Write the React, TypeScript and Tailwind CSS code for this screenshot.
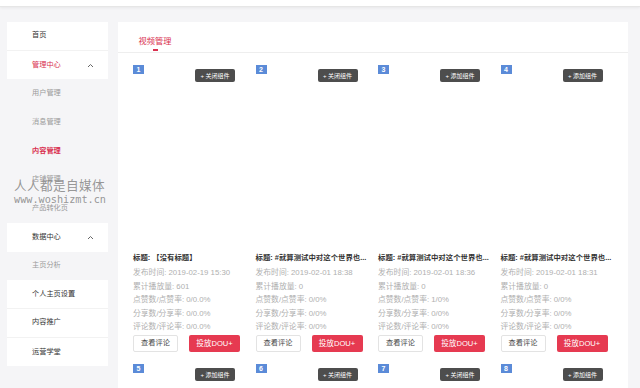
import React from 'react';

type Video = {
  id: number;
  title: string;
  time: string;
  plays: string;
  likes: string;
  shares: string;
  comments: string;
  widgetOn: boolean;
};

const longTitle = '标题: #就算测试中对这个世界也...';

const videos: Video[] = [
  { id: 1, title: '标题: 【没有标题】', time: '2019-02-19 15:30', plays: '601', likes: '0/0.0%', shares: '0/0.0%', comments: '0/0.0%', widgetOn: true },
  { id: 2, title: longTitle, time: '2019-02-01 18:38', plays: '0', likes: '0/0%', shares: '0/0%', comments: '0/0%', widgetOn: true },
  { id: 3, title: longTitle, time: '2019-02-01 18:36', plays: '0', likes: '1/0%', shares: '0/0%', comments: '0/0%', widgetOn: false },
  { id: 4, title: longTitle, time: '2019-02-01 18:31', plays: '0', likes: '0/0%', shares: '0/0%', comments: '0/0%', widgetOn: false },
  { id: 5, title: longTitle, time: '2019-01-30 12:10', plays: '0', likes: '0/0%', shares: '0/0%', comments: '0/0%', widgetOn: false },
  { id: 6, title: longTitle, time: '2019-01-30 12:06', plays: '0', likes: '0/0%', shares: '0/0%', comments: '0/0%', widgetOn: true },
  { id: 7, title: longTitle, time: '2019-01-29 20:41', plays: '0', likes: '0/0%', shares: '0/0%', comments: '0/0%', widgetOn: true },
  { id: 8, title: longTitle, time: '2019-01-29 20:33', plays: '0', likes: '0/0%', shares: '0/0%', comments: '0/0%', widgetOn: false },
];

const font = { fontFamily: '"Liberation Sans", "Noto Sans CJK SC", sans-serif' };

const Chevron = () => (
  <svg width="7" height="5" viewBox="0 0 7 5" className="text-[#666]">
    <path d="M1 4 L3.5 1.5 L6 4" fill="none" stroke="currentColor" strokeWidth="1" />
  </svg>
);

// sidebar row
const MenuRow = ({
  label,
  kind,
  active,
  open,
  line,
}: {
  label: string;
  kind: 'main' | 'sub';
  active?: boolean;
  open?: boolean;
  line?: boolean;
}) => (
  <div
    className={`flex h-[28.7px] items-center justify-between pl-[25px] pr-[14px] text-[7.2px] ${
      kind === 'main' ? 'bg-white' : 'bg-[#f5f5f7]'
    } ${line ? 'border-b border-[#f2f2f2]' : ''} ${
      active ? (kind === 'sub' ? 'font-bold text-[#d9304f]' : 'text-[#d9304f]') : kind === 'sub' ? 'text-[#9a9a9a]' : 'text-[#333]'
    }`}
  >
    <span>{label}</span>
    {open && <Chevron />}
  </div>
);

const VideoCard = ({ v }: { v: Video }) => (
  <div className="flex w-[107px] flex-col">
    {/* cover area */}
    <div className="flex h-[186px] items-start justify-between">
      <span className="flex h-[9px] w-[11px] items-center justify-center bg-[#5b8bd8] text-[7px] font-bold leading-none text-white">
        {v.id}
      </span>
      <span className="mr-[5px] mt-[4px] flex h-[13px] w-[40px] items-center justify-center rounded-[2px] bg-[#4d4d4d] text-[6px] leading-none text-white">
        + {v.widgetOn ? '关闭组件' : '添加组件'}
      </span>
    </div>

    {/* info */}
    <div className="whitespace-nowrap text-[7.4px] font-bold leading-[14px] text-[#333]">{v.title}</div>
    <div className="mt-[1px] whitespace-nowrap text-[7.8px] leading-[13.5px] text-[#b0b0b0]">
      <div>发布时间: {v.time}</div>
      <div>累计播放量: {v.plays}</div>
      <div>点赞数/点赞率: {v.likes}</div>
      <div>分享数/分享率: {v.shares}</div>
      <div>评论数/评论率: {v.comments}</div>
    </div>

    <div className="mt-[1.5px] flex gap-[11px]">
      <span className="flex h-[17px] w-[45px] items-center justify-center rounded-[2px] border border-[#e3e3e3] bg-white text-[7.2px] text-[#444]">
        查看评论
      </span>
      <span className="flex h-[17px] w-[51px] items-center justify-center rounded-[2px] bg-[#e63a51] text-[7.6px] text-white">
        投放DOU+
      </span>
    </div>
  </div>
);

export default function App() {
  return (
    <div className="relative h-[388px] w-[640px] overflow-hidden bg-[#f5f5f7]" style={font}>
      {/* top bar */}
      <div className="h-[7px] border-b border-[#e6e6e6] bg-white shadow-[0_1px_3px_rgba(0,0,0,0.06)]" />

      <div className="flex gap-[10px] pl-[7px] pr-[12px] pt-[15px]">
        {/* Sidebar */}
        <div className="relative flex w-[101px] shrink-0 flex-col self-start">
          <MenuRow label="首页" kind="main" line />
          <MenuRow label="管理中心" kind="main" active open />
          <MenuRow label="用户管理" kind="sub" />
          <MenuRow label="消息管理" kind="sub" />
          <MenuRow label="内容管理" kind="sub" active />
          <MenuRow label="店铺管理" kind="sub" />
          <MenuRow label="产品转化页" kind="sub" />
          <MenuRow label="数据中心" kind="main" open />
          <MenuRow label="主页分析" kind="sub" />
          <MenuRow label="个人主页设置" kind="main" line />
          <MenuRow label="内容推广" kind="main" line />
          <MenuRow label="运营学堂" kind="main" />

          {/* watermark */}
          <div className="pointer-events-none absolute left-[7px] top-[154px] flex flex-col text-[#8a8a8a]/90">
            <span className="text-[12.6px] leading-[18px] tracking-[0.4px]" style={{ fontFamily: '"Noto Sans CJK SC", sans-serif' }}>
              人人都是自媒体
            </span>
            <span className="text-[10.2px] leading-[11px]" style={{ fontFamily: '"DejaVu Sans Mono", monospace' }}>
              www.woshizmt.cn
            </span>
          </div>
        </div>

        {/* Main panel */}
        <div className="flex-1 bg-white">
          <div className="border-b border-[#eeeeee] px-[20px] pb-[1px] pt-[14px]">
            <div className="flex w-[34px] flex-col items-center">
              <span className="text-[8.2px] leading-[12px] text-[#d9304f]">视频管理</span>
              <span className="mt-[1px] h-[2px] w-[5px] bg-[#d9304f]" />
            </div>
          </div>

          <div className="grid grid-cols-[repeat(4,107px)] gap-x-[15.5px] gap-y-[12px] pl-[15px] pt-[12px]">
            {videos.map((v) => (
              <VideoCard key={v.id} v={v} />
            ))}
          </div>
        </div>
      </div>
    </div>
  );
}
